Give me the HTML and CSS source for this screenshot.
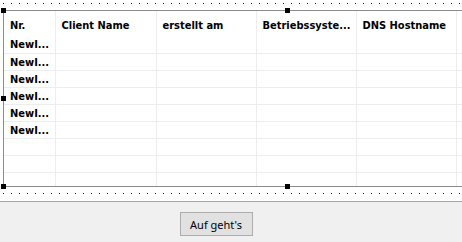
FILE: index.html
```html
<!DOCTYPE html>
<html lang="de">
<head>
  <meta charset="UTF-8">
  <meta name="viewport" content="width=device-width, initial-scale=1.0">
  <title>Client-Liste</title>
  <link rel="stylesheet" href="styles.css">
</head>
<body>
  <div class="surface">
    <div class="dots dots-top"></div>

    <!-- Grid im Designer, mit Auswahl-Griffen -->
    <div class="designer">
      <div class="grid-clip">
        <table class="grid">
          <colgroup>
            <col class="col-nr">
            <col class="col-wide">
            <col class="col-std">
            <col class="col-std">
            <col class="col-std">
            <col class="col-std">
          </colgroup>
          <thead>
            <tr>
              <th>Nr.</th>
              <th>Client Name</th>
              <th>erstellt am</th>
              <th>Betriebssyste...</th>
              <th>DNS Hostname</th>
              <th></th>
            </tr>
          </thead>
          <tbody>
            <tr><td>NewI...</td><td></td><td></td><td></td><td></td><td></td></tr>
            <tr><td>NewI...</td><td></td><td></td><td></td><td></td><td></td></tr>
            <tr><td>NewI...</td><td></td><td></td><td></td><td></td><td></td></tr>
            <tr><td>NewI...</td><td></td><td></td><td></td><td></td><td></td></tr>
            <tr><td>NewI...</td><td></td><td></td><td></td><td></td><td></td></tr>
            <tr><td>NewI...</td><td></td><td></td><td></td><td></td><td></td></tr>
            <tr><td></td><td></td><td></td><td></td><td></td><td></td></tr>
            <tr><td></td><td></td><td></td><td></td><td></td><td></td></tr>
            <tr><td></td><td></td><td></td><td></td><td></td><td></td></tr>
          </tbody>
        </table>
      </div>
      <span class="handle h-tl"></span>
      <span class="handle h-tm"></span>
      <span class="handle h-ml"></span>
      <span class="handle h-bl"></span>
      <span class="handle h-bm"></span>
    </div>

    <div class="dots dots-bottom"></div>
  </div>

  <div class="panel">
    <button class="btn" type="button">Auf geht's</button>
  </div>
</body>
</html>
```

FILE: styles.css
```css
:root {
  --grid-line: #ededed;
  --frame: #8c8c8c;
  --panel-bg: #f0f0f0;
}

* {
  margin: 0;
  padding: 0;
  box-sizing: border-box;
}

html, body {
  width: 462px;
  height: 242px;
  overflow: hidden;
}

body {
  background: #fff;
  font-family: "DejaVu Sans Condensed", "DejaVu Sans", sans-serif;
  color: #000;
}

.surface {
  background: #fff;
}

.dots {
  background-image: linear-gradient(90deg, #111 1px, transparent 1px);
  background-size: 8px 1px;
  background-repeat: repeat-x;
}

.dots-top {
  height: 10px;
  background-position: 3px 3px;
}

.dots-bottom {
  height: 14px;
  background-position: 3px 6px;
}

.designer {
  position: relative;
  margin-left: 3px;
  width: 459px;
  height: 177px;
  border-top: 1px solid var(--frame);
  border-bottom: 1px solid var(--frame);
  border-left: 1px solid var(--frame);
}

.grid-clip {
  height: 100%;
  overflow: hidden;
}

.grid {
  table-layout: fixed;
  border-collapse: collapse;
  width: 552px;
  font-size: 11px;
  font-weight: bold;
}

.col-nr { width: 51px; }
.col-wide { width: 101px; }
.col-std { width: 100px; }

.grid th,
.grid td {
  border-right: 1px solid var(--grid-line);
  padding: 0 0 0 6px;
  text-align: left;
  white-space: nowrap;
  overflow: hidden;
}

.grid th {
  height: 25px;
  padding-top: 3px;
}

.grid td {
  height: 17px;
  padding-top: 1px;
  border-bottom: 1px solid var(--grid-line);
}

.handle {
  position: absolute;
  width: 5px;
  height: 5px;
  background: #000;
}

.h-tl { left: -3px; top: -3px; }
.h-tm { left: 281px; top: -3px; }
.h-ml { left: -3px; top: 85px; }
.h-bl { left: -3px; top: 173px; }
.h-bm { left: 281px; top: 173px; }

.panel {
  background: var(--panel-bg);
  border-top: 1px solid #a6a6a6;
  height: 43px;
  padding: 10px 30px 0 0;
  display: flex;
  justify-content: center;
}

.btn {
  width: 73px;
  height: 24px;
  background: #e1e1e1;
  border: 1px solid #adadad;
  font-family: "Noto Sans", "Liberation Sans", sans-serif;
  font-size: 11px;
  color: #000;
}
```
